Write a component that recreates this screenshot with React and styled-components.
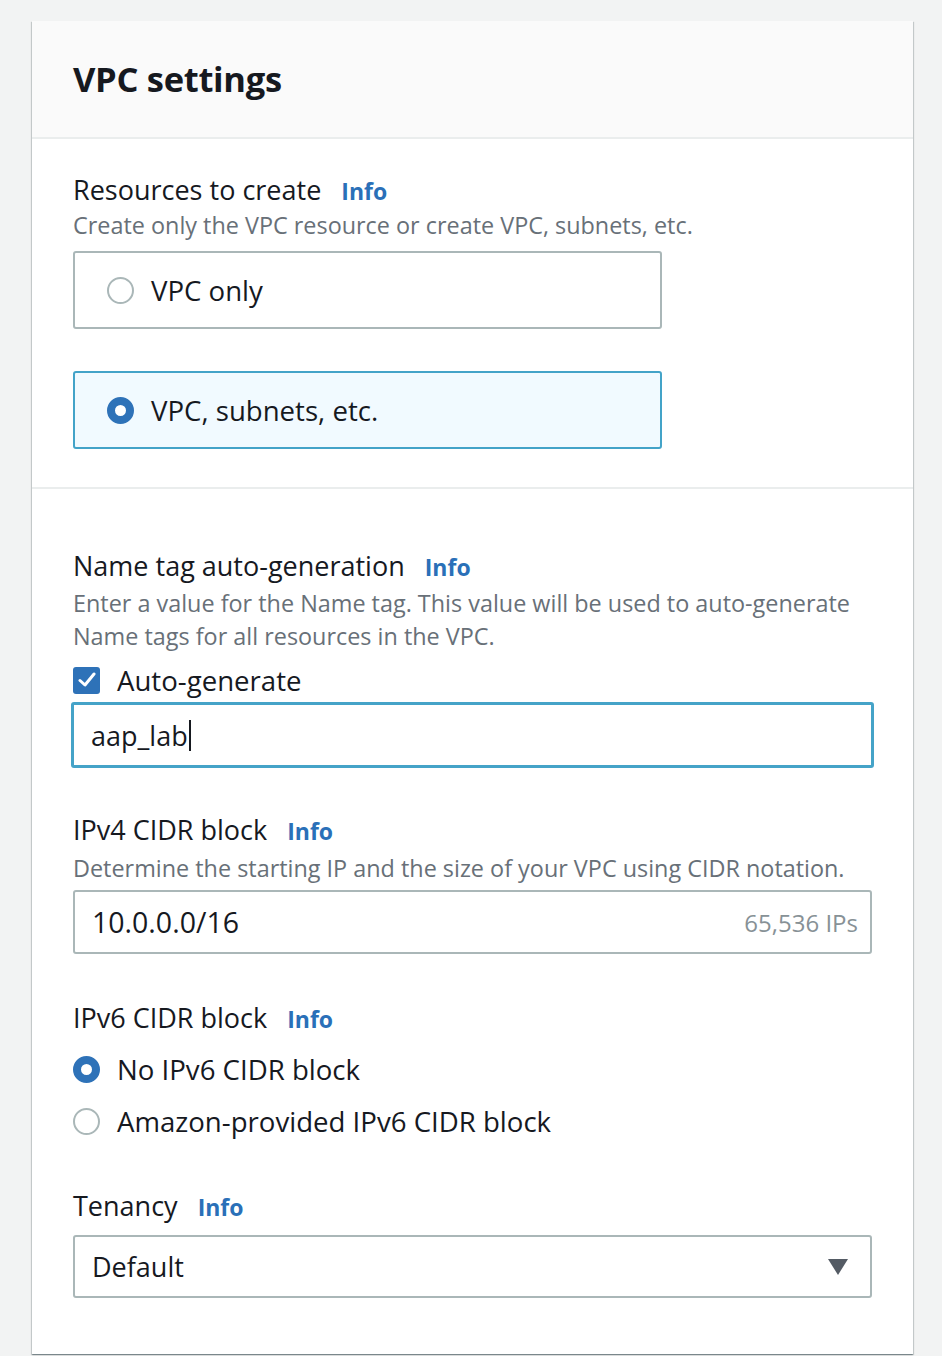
import React from "react";
import styled, { createGlobalStyle } from "styled-components";

const Global = createGlobalStyle`
  html, body { margin: 0; padding: 0; background: #f2f3f3; }
  body { font-family: "Open Sans", "Noto Sans", Arial, sans-serif; color: #16191f; }
  * { box-sizing: border-box; }
`;

const Page = styled.div`
  padding: 21px 29px 0 32px;
  min-height: 1356px;
`;

const Card = styled.div`
  background: #fff;
  box-shadow: 0 1px 1px 0 rgba(0, 28, 36, 0.3), 1px 1px 1px 0 rgba(0, 28, 36, 0.15),
    -1px 1px 1px 0 rgba(0, 28, 36, 0.15);
`;

const Header = styled.div`
  height: 118px;
  background: #fafafa;
  border-bottom: 2px solid #eaeded;
  display: flex;
  align-items: center;
  padding: 0 41px 2px;
`;

const Title = styled.h2`
  margin: 0;
  font-size: 34.5px;
  font-weight: 700;
  letter-spacing: -0.3px;
  color: #16191f;
`;

const Section = styled.div`
  padding: ${(p) => p.$pt}px 41px ${(p) => p.$pb}px;
  border-bottom: ${(p) => (p.$divider ? "2px solid #eaeded" : "none")};
  display: flex;
  flex-direction: column;
`;

const LabelRow = styled.div`
  display: flex;
  align-items: baseline;
  gap: 20px;
  margin-top: ${(p) => p.$mt || 0}px;
  line-height: 32px;
  white-space: nowrap;
`;

const Label = styled.span`
  font-size: 27px;
  color: #16191f;
`;

const InfoLink = styled.a`
  font-size: 23px;
  font-weight: 700;
  color: #2a70b8;
  text-decoration: none;
`;

const Desc = styled.div`
  font-size: 23.4px;
  line-height: 33px;
  color: #687078;
  white-space: nowrap;
  margin-top: ${(p) => p.$mt || 0}px;
`;

const Tile = styled.div`
  width: 589px;
  height: 78px;
  margin-top: ${(p) => p.$mt}px;
  border: 2px solid ${(p) => (p.$selected ? "#43a3c8" : "#aab7b8")};
  background: ${(p) => (p.$selected ? "#f1faff" : "#fff")};
  border-radius: 3px;
  display: flex;
  align-items: center;
  padding-left: 32px;
  gap: 17px;
`;

const Radio = styled.span`
  width: 27px;
  height: 27px;
  border-radius: 50%;
  flex: none;
  border: ${(p) => (p.$checked ? "8px solid #2e72b8" : "2px solid #aab7b8")};
  background: #fff;
`;

const OptionText = styled.span`
  font-size: 27.6px;
  color: #16191f;
  white-space: nowrap;
`;

const RadioRow = styled.div`
  display: flex;
  align-items: center;
  gap: 17px;
  height: 36px;
  margin-top: ${(p) => p.$mt}px;
`;

const CheckRow = styled.div`
  display: flex;
  align-items: center;
  gap: 17px;
  height: 36px;
  margin-top: ${(p) => p.$mt}px;
`;

const CheckBox = styled.span`
  width: 27px;
  height: 27px;
  border-radius: 3px;
  background: #2e72b8;
  display: flex;
  align-items: center;
  justify-content: center;
  flex: none;
`;

const Input = styled.div`
  width: ${(p) => p.$w}px;
  margin-left: ${(p) => p.$ml || 0}px;
  height: ${(p) => p.$h}px;
  flex: none;
  margin-top: ${(p) => p.$mt}px;
  border: ${(p) => (p.$focused ? "3px solid #45a3c8" : "2px solid #aab7b8")};
  border-radius: 3px;
  display: flex;
  align-items: center;
  justify-content: space-between;
  padding: 0 12px 0 17px;
  background: #fff;
`;

const InputText = styled.span`
  font-size: ${(p) => p.$fs || 27}px;
  color: #16191f;
  display: flex;
  align-items: center;
`;

const Caret = styled.span`
  display: inline-block;
  width: 2px;
  height: 31px;
  background: #16191f;
  margin-left: 1px;
`;

const Hint = styled.span`
  font-size: 24px;
  color: #879196;
`;

const Arrow = styled.svg`
  width: 20px;
  height: 16px;
  margin-right: 10px;
`;

function Field({ mt, label, children }) {
  return (
    <>
      <LabelRow $mt={mt}>
        <Label>{label}</Label>
        <InfoLink href="#">Info</InfoLink>
      </LabelRow>
      {children}
    </>
  );
}

export default function App() {
  return (
    <Page>
      <Global />
      <Card>
        <Header>
          <Title>VPC settings</Title>
        </Header>
        <Section $pt={35} $pb={38} $divider>
          <Field label="Resources to create">
            <Desc $mt={2}>Create only the VPC resource or create VPC, subnets, etc.</Desc>
          </Field>
          <Tile $mt={9}>
            <Radio />
            <OptionText>VPC only</OptionText>
          </Tile>
          <Tile $mt={42} $selected>
            <Radio $checked />
            <OptionText>VPC, subnets, etc.</OptionText>
          </Tile>
        </Section>
        <Section $pt={61} $pb={56}>
          <Field label="Name tag auto-generation">
            <Desc $mt={4}>
              Enter a value for the Name tag. This value will be used to auto-generate
              <br />
              Name tags for all resources in the VPC.
            </Desc>
          </Field>
          <CheckRow $mt={9}>
            <CheckBox>
              <svg width="18" height="16" viewBox="0 0 18 16">
                <polyline points="2,8.5 7,13 16,2" fill="none" stroke="#fff" strokeWidth="3" strokeLinecap="round" strokeLinejoin="round" />
              </svg>
            </CheckBox>
            <OptionText>Auto-generate</OptionText>
          </CheckRow>
          <Input $focused $w={803} $ml={-2} $h={66} $mt={4}>
            <InputText>
              aap_lab
              <Caret />
            </InputText>
          </Input>
          <Field mt={46} label="IPv4 CIDR block">
            <Desc $mt={5}>Determine the starting IP and the size of your VPC using CIDR notation.</Desc>
          </Field>
          <Input $w={799} $h={64} $mt={5}>
            <InputText $fs={28.5}>10.0.0.0/16</InputText>
            <Hint>65,536 IPs</Hint>
          </Input>
          <Field mt={48} label="IPv6 CIDR block">
            <RadioRow $mt={16}>
              <Radio $checked />
              <OptionText>No IPv6 CIDR block</OptionText>
            </RadioRow>
            <RadioRow $mt={16}>
              <Radio />
              <OptionText>Amazon-provided IPv6 CIDR block</OptionText>
            </RadioRow>
          </Field>
          <Field mt={51} label="Tenancy">
            <Input $w={799} $h={63} $mt={12}>
              <InputText>Default</InputText>
              <Arrow viewBox="0 0 20 16">
                <polygon points="0,0 20,0 10,16" fill="#545b64" />
              </Arrow>
            </Input>
          </Field>
        </Section>
      </Card>
    </Page>
  );
}
